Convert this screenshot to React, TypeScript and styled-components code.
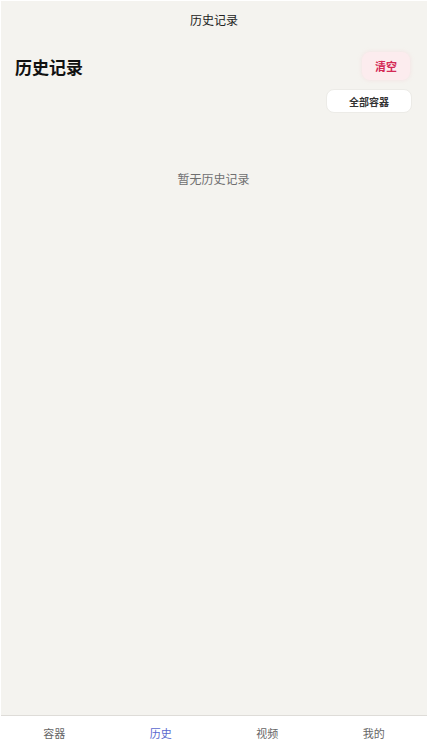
import styled, { createGlobalStyle } from "styled-components";

const GlobalStyle = createGlobalStyle`
  html, body {
    margin: 0;
    padding: 0;
    background: #f4f3ef;
  }
  #root {
    height: 100vh;
  }
  * {
    box-sizing: border-box;
  }
`;

const tabs = ["容器", "历史", "视频", "我的"];

const App = () => {
  return (
    <Screen>
      <GlobalStyle />
      <NavBar>历史记录</NavBar>
      <Content>
        <HeaderRow>
          <Title>历史记录</Title>
          <ClearButton>清空</ClearButton>
        </HeaderRow>
        <FilterRow>
          <FilterButton>全部容器</FilterButton>
        </FilterRow>
        <Empty>暂无历史记录</Empty>
      </Content>
      <TabBar>
        {tabs.map((t) => (
          <Tab key={t} $active={t === "历史"}>
            {t}
          </Tab>
        ))}
      </TabBar>
    </Screen>
  );
};

const Screen = styled.div`
  height: 100vh;
  display: flex;
  flex-direction: column;
  background: #f4f3ef;
  border-top: 1px solid #ffffff;
  border-left: 1px solid #ffffff;
  font-family: "Noto Sans CJK SC", "Noto Sans", sans-serif;
  color: #111;
`;

const NavBar = styled.div`
  height: 36px;
  display: flex;
  align-items: center;
  justify-content: center;
  font-size: 12px;
  color: #222;
`;

const Content = styled.div`
  flex: 1;
  display: flex;
  flex-direction: column;
  padding: 15px 15px 0 14px;
`;

const HeaderRow = styled.div`
  display: flex;
  align-items: center;
  justify-content: space-between;
`;

const Title = styled.h1`
  margin: 0;
  font-size: 17px;
  font-weight: 700;
  color: #111;
`;

const ClearButton = styled.button`
  width: 48px;
  height: 28px;
  border: none;
  border-radius: 8px;
  background: #fcecee;
  box-shadow: 0 0 4px rgba(245, 190, 200, 0.35);
  color: #d42a56;
  font-family: inherit;
  font-size: 11px;
  font-weight: 700;
  margin-right: 2px;
`;

const FilterRow = styled.div`
  display: flex;
  justify-content: flex-end;
  margin-top: 9px;
`;

const FilterButton = styled.button`
  width: 86px;
  height: 24px;
  border: 1px solid #ecebe7;
  border-radius: 8px;
  background: #ffffff;
  color: #333;
  font-family: inherit;
  font-size: 10px;
  font-weight: 600;
`;

const Empty = styled.div`
  margin-top: 57px;
  text-align: center;
  font-size: 12px;
  color: #6f6f6f;
`;

const TabBar = styled.nav`
  height: 35px;
  display: grid;
  grid-template-columns: repeat(4, 1fr);
  align-items: center;
  background: #ffffff;
  border-top: 1px solid #dedcd8;
`;

const Tab = styled.div<{ $active: boolean }>`
  text-align: center;
  font-size: 11px;
  color: ${(p) => (p.$active ? "#5a68cf" : "#666")};
`;

export default App;
